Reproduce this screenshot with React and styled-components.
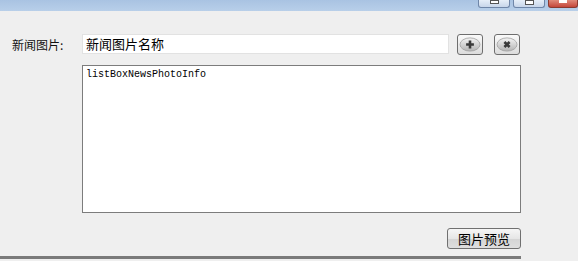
import React from 'react';
import styled, {createGlobalStyle} from 'styled-components';

const Global = createGlobalStyle`
  html, body { margin: 0; padding: 0; background: #efefef; }
  body { font-family: "Noto Sans CJK SC", "Liberation Sans", sans-serif; }
`;

const Window = styled.div`
  width: 578px;
  height: 261px;
  background: #efefef;
  display: flex;
  flex-direction: column;
  overflow: hidden;
`;

const TitleBar = styled.div`
  height: 11px;
  background: linear-gradient(#a9c3e2, #b8cfe9);
  display: flex;
  justify-content: flex-end;
  align-items: flex-start;
  gap: 3px;
`;

const CaptionButton = styled.div`
  width: ${p => p.$w}px;
  height: 7px;
  border: 1px solid ${p => (p.$close ? '#8a3a30' : '#6f86a8')};
  border-top: none;
  border-radius: 0 0 3px 3px;
  background: ${p => (p.$close ? 'linear-gradient(#e08a7a, #c4463a)' : 'linear-gradient(#e6eef8, #c7d6ea)')};
  display: flex;
  justify-content: center;
  align-items: flex-start;
`;

const CaptionGlyph = styled.span`
  display: block;
  width: ${p => p.$w}px;
  height: ${p => p.$h}px;
  background: ${p => p.$bg};
  border: ${p => p.$border || 'none'};
  box-sizing: border-box;
`;

const Body = styled.div`
  display: flex;
  flex-direction: column;
  padding: 22px 0 0 0;
`;

const Row = styled.div`
  display: flex;
  align-items: center;
  height: 22px;
`;

const Label = styled.div`
  padding-left: 12px;
  font-size: 12px;
  color: #111;
  box-sizing: border-box;
  width: 82px;
`;

const TextInput = styled.div`
  width: 367px;
  height: 20px;
  box-sizing: border-box;
  background: #fff;
  border: 1px solid #e2e2e2;
  font-size: 13px;
  color: #000;
  line-height: 18px;
  padding-left: 3px;
`;

const IconButton = styled.div`
  width: 26px;
  height: 21px;
  margin-left: ${p => p.$ml}px;
  box-sizing: border-box;
  border: 1px solid #6e6e6e;
  border-radius: 3px;
  background: linear-gradient(#fafafa, #dcdcdc);
  display: flex;
  align-items: center;
  justify-content: center;
`;

const ListBox = styled.div`
  margin: 10px 0 0 82px;
  width: 439px;
  height: 148px;
  box-sizing: border-box;
  background: #fff;
  border: 1px solid #7c7c7c;
  font-family: "Liberation Mono", monospace;
  font-size: 10px;
  color: #000;
  padding: 3px 0 0 3px;
`;

const Footer = styled.div`
  display: flex;
  justify-content: flex-end;
  width: 521px;
  margin-top: 15px;
`;

const PushButton = styled.div`
  width: 74px;
  height: 21px;
  box-sizing: border-box;
  border: 1px solid #707070;
  border-radius: 3px;
  background: linear-gradient(#f6f6f6 0%, #e6e6e6 50%, #d4d4d4 51%, #dedede 100%);
  font-size: 13px;
  line-height: 19px;
  text-align: center;
  color: #000;
`;

const BottomRule = styled.div`
  margin-top: 7px;
  width: 521px;
  height: 3px;
  background: #7a7a7a;
`;

const Badge = ({kind}) => (
  <svg width="22" height="15" viewBox="0 0 22 15">
    <defs>
      <linearGradient id={`g-${kind}`} x1="0" y1="0" x2="0" y2="1">
        <stop offset="0" stopColor="#f4f4f4" />
        <stop offset="1" stopColor="#b4b4b4" />
      </linearGradient>
    </defs>
    <ellipse cx="11" cy="7.5" rx="10" ry="6.6" fill={`url(#g-${kind})`} stroke="#a0a0a0" strokeWidth="0.8" />
    {kind === 'add' ? (
      <path d="M11 3.6v7.8M7.1 7.5h7.8" stroke="#3a3a3a" strokeWidth="2.6" />
    ) : (
      <path d="M8.4 5l5.2 5M13.6 5l-5.2 5" stroke="#3a3a3a" strokeWidth="2.6" />
    )}
  </svg>
);

export default function App() {
  return (
    <Window>
      <Global />
      <TitleBar>
        <CaptionButton $w={30}><CaptionGlyph $w={9} $h={4} $bg="#fff" $border="1px solid #555" /></CaptionButton>
        <CaptionButton $w={30}><CaptionGlyph $w={9} $h={5} $bg="#fff" $border="1px solid #555" /></CaptionButton>
        <CaptionButton $w={28} $close><CaptionGlyph $w={8} $h={3} $bg="#fff" /></CaptionButton>
      </TitleBar>
      <Body>
        <Row>
          <Label>新闻图片:</Label>
          <TextInput>新闻图片名称</TextInput>
          <IconButton $ml={8}><Badge kind="add" /></IconButton>
          <IconButton $ml={11}><Badge kind="del" /></IconButton>
        </Row>
        <ListBox>listBoxNewsPhotoInfo</ListBox>
        <Footer>
          <PushButton>图片预览</PushButton>
        </Footer>
        <BottomRule />
      </Body>
    </Window>
  );
}
